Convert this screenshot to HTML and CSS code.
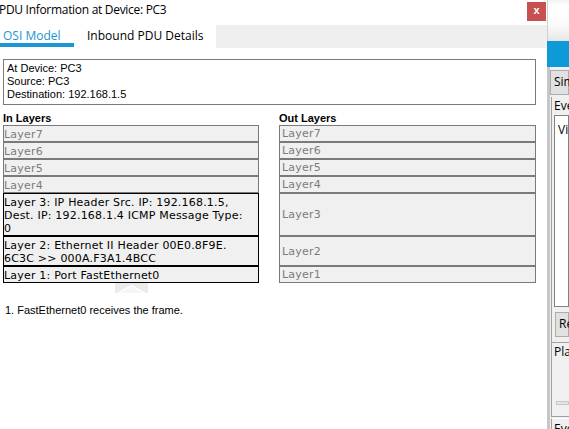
FILE: index.html
```html
<!DOCTYPE html>
<html>
<head>
<meta charset="utf-8">
<link rel="stylesheet" href="styles.css">
</head>
<body>
<div class="screen">
  <div class="dialog">
    <div class="titlebar">
      <span class="title">PDU Information at Device: PC3</span>
      <div class="close">x</div>
    </div>
    <div class="tabs">
      <div class="tab tab-osi">OSI Model</div>
      <div class="tab tab-inbound">Inbound PDU Details</div>
      <div class="tab-fill"></div>
    </div>
    <div class="info">
      <div>At Device: PC3</div>
      <div>Source: PC3</div>
      <div>Destination: 192.168.1.5</div>
    </div>
    <div class="layers">
      <div class="col-head">In Layers</div>
      <div class="col-head">Out Layers</div>

      <div class="layer in">Layer7</div>
      <div class="layer out">Layer7</div>
      <div class="layer in">Layer6</div>
      <div class="layer out">Layer6</div>
      <div class="layer in">Layer5</div>
      <div class="layer out">Layer5</div>
      <div class="layer in">Layer4</div>
      <div class="layer out">Layer4</div>
      <div class="layer in active">Layer 3: IP Header Src. IP: 192.168.1.5,<br>Dest. IP: 192.168.1.4 ICMP Message Type:<br>0</div>
      <div class="layer out">Layer3</div>
      <div class="layer in active">Layer 2: Ethernet II Header 00E0.8F9E.<br>6C3C &gt;&gt; 000A.F3A1.4BCC</div>
      <div class="layer out">Layer2</div>
      <div class="layer in active">Layer 1: Port FastEthernet0</div>
      <div class="layer out">Layer1</div>
    </div>
    <div class="expander">
      <svg width="33" height="10" viewBox="0 0 33 10">
        <rect x="0" y="0" width="33" height="10" fill="#ebebeb"/>
        <polygon points="3,10 16.5,2.5 30,10" fill="#f6f6f6"/>
        <polyline points="3,10 16.5,2.5 30,10" fill="none" stroke="#ffffff" stroke-width="1.2"/>
      </svg>
    </div>
    <p class="desc">1. FastEthernet0 receives the frame.</p>
  </div>

  <div class="bgapp">
    <div class="bg-top"></div>
    <div class="bg-blue"></div>
    <div class="bg-panel">
      <div class="bg-btn bg-sim">Sim</div>
      <div class="bg-group">
        <div class="bg-label">Eve</div>
        <div class="bg-list">Vi</div>
        <div class="bg-btn bg-re">Re</div>
      </div>
      <div class="bg-group2">
        <div class="bg-label">Pla</div>
        <div class="bg-slider"></div>
      </div>
      <div class="bg-group3">
        <div class="bg-label">Eve</div>
      </div>
    </div>
  </div>
</div>
</body>
</html>
```

FILE: styles.css
```css
* { box-sizing: border-box; }
html, body { margin: 0; padding: 0; }
body { width: 569px; height: 429px; overflow: hidden; background: #fff; }

.screen { display: flex; width: 569px; height: 429px; }

.dialog {
  width: 547px;
  flex: none;
  background: #fff;
  display: flex;
  flex-direction: column;
}

.titlebar {
  height: 25px;
  flex: none;
  display: flex;
  align-items: flex-start;
  justify-content: space-between;
}
.title {
  font: 12px/16px "Open Sans", sans-serif;
  letter-spacing: -0.3px;
  color: #000;
  padding-top: 2px;
  margin-left: -1px;
  white-space: nowrap;
}
.close {
  width: 19px;
  height: 19px;
  margin: 2px 1px 0 0;
  background: #c75050;
  color: #fff;
  text-align: center;
  font: bold 11px/17px "Liberation Sans", sans-serif;
}

.tabs { height: 23px; flex: none; display: flex; }
.tab {
  font: 12px/16px "Open Sans", sans-serif;
  padding-top: 3px;
  white-space: nowrap;
}
.tab-osi {
  width: 74px;
  height: 22px;
  padding-left: 3px;
  color: #1a96d4;
  border-bottom: 4px solid #1a96d4;
}
.tab-inbound { width: 142px; padding-left: 13px; color: #000; }
.tab-fill { flex: 1; background: #efefef; }

.info {
  flex: none;
  margin: 11px 11px 0 3px;
  height: 46px;
  border: 1px solid #7a7a7a;
  padding: 2px 3px 3px;
  font: 11px/13px "Liberation Sans", Arial, sans-serif;
  color: #000;
}

.layers {
  flex: none;
  display: grid;
  grid-template-columns: 256px 257px;
  column-gap: 20px;
  margin: 7px 0 0 3px;
}
.col-head {
  font: bold 11px/13px "Liberation Sans", Arial, sans-serif;
  color: #000;
}
.layer {
  border: 1px solid #7a7a7a;
  background: #f0f0f0;
  color: #7c7c7c;
  font: 11px/13px "DejaVu Sans", Verdana, sans-serif;
  letter-spacing: 0.2px;
  padding: 2px 2px 0;
  white-space: nowrap;
  overflow: hidden;
}
.layer.in { padding-left: 0; }
.layer.active { border-color: #000; color: #000; }
.layer.out {
  display: flex;
  align-items: center;
  padding: 1px 2px;
}

.expander {
  flex: none;
  width: 256px;
  margin-left: 3px;
  height: 10px;
  display: flex;
  justify-content: center;
}
.expander svg { display: block; }

.desc {
  flex: none;
  margin: 11px 0 0;
  padding-left: 5px;
  font: 11px/13px "Liberation Sans", Arial, sans-serif;
  color: #000;
}

/* background application window */
.bgapp {
  flex: 1;
  min-width: 0;
  display: flex;
  flex-direction: column;
  overflow: hidden;
  font: 12px/16px "Open Sans", sans-serif;
  color: #000;
  white-space: nowrap;
}
.bg-top {
  flex: none;
  height: 41px;
  border-left: 1px solid #cfcfcf;
  background: linear-gradient(#f3f3f3 0, #ffffff 6px, #fbfbfb 60%, #e6e6e6 100%);
}
.bg-blue { flex: none; height: 26px; background: #0e9ad6; }
.bg-panel {
  flex: 1;
  min-height: 0;
  overflow: hidden;
  background: #f0f0f0;
  border-left: 3px solid #c6c6c6;
  display: flex;
  flex-direction: column;
}
.bg-btn {
  flex: none;
  height: 25px;
  border: 1px solid #adadad;
  background: #e1e1e1;
  padding: 3px 0 0 3px;
}
.bg-sim { margin-top: 3px; }
.bg-group {
  flex: none;
  margin: 2px 0 0 1px;
  height: 246px;
  border-left: 1px solid #a0a0a0;
  border-bottom: 1px solid #a0a0a0;
  display: flex;
  flex-direction: column;
}
.bg-label { flex: none; padding-left: 2px; height: 18px; padding-top: 1px; }
.bg-list {
  flex: none;
  margin-left: 2px;
  height: 192px;
  border: 1px solid #828282;
  background: #fff;
  padding: 6px 0 0 3px;
}
.bg-re { margin: 5px 0 0 3px; }
.bg-group2 {
  flex: none;
  margin-left: 1px;
  height: 74px;
  border-left: 1px solid #a0a0a0;
  border-bottom: 1px solid #a0a0a0;
  display: flex;
  flex-direction: column;
}
.bg-slider {
  flex: none;
  margin: 40px 0 0 4px;
  height: 4px;
  border: 1px solid #c8c8c8;
  background: #e4e4e4;
}
.bg-group3 {
  flex: 1;
  margin: 1px 0 0 1px;
  border-left: 1px solid #a0a0a0;
  border-top: 1px solid #ffffff;
}
.bg-group3 .bg-label { padding-top: 2px; }
```
